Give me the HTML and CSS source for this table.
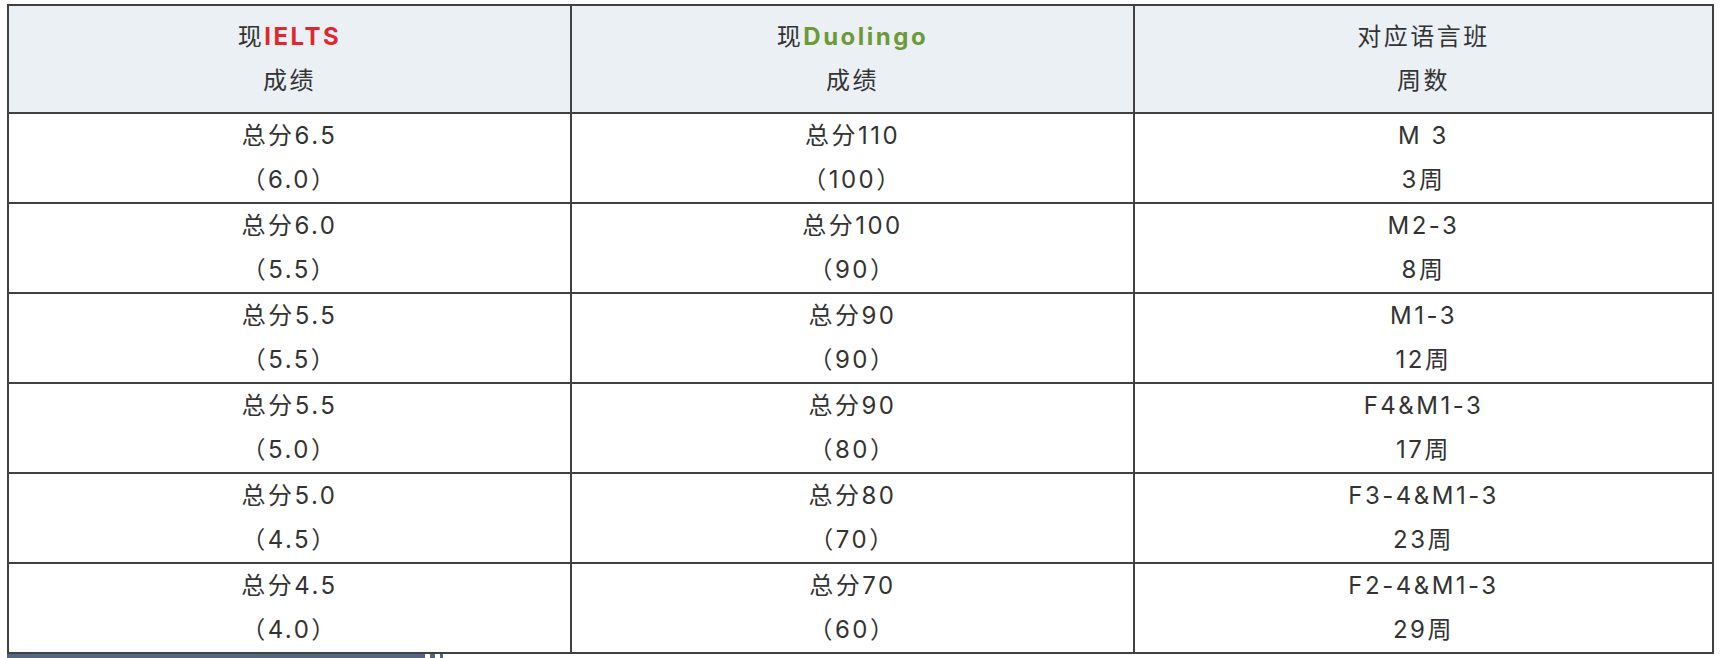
FILE: index.html
```html
<!DOCTYPE html>
<html lang="zh-CN">
<head>
<meta charset="utf-8">
<title>成绩对照表</title>
<link rel="stylesheet" href="styles.css">
</head>
<body>
<div class="wrap">
  <table class="grid">
    <colgroup>
      <col class="c1"><col class="c2"><col class="c3">
    </colgroup>
    <thead>
      <tr>
        <th>现<span class="ielts">IELTS</span><br>成绩</th>
        <th>现<span class="duo">Duolingo</span><br>成绩</th>
        <th>对应语言班<br>周数</th>
      </tr>
    </thead>
    <tbody>
      <tr><td>总分6.5<br>（6.0）</td><td>总分110<br>（100）</td><td>M 3<br>3周</td></tr>
      <tr><td>总分6.0<br>（5.5）</td><td>总分100<br>（90）</td><td>M2-3<br>8周</td></tr>
      <tr><td>总分5.5<br>（5.5）</td><td>总分90<br>（90）</td><td>M1-3<br>12周</td></tr>
      <tr><td>总分5.5<br>（5.0）</td><td>总分90<br>（80）</td><td>F4&amp;M1-3<br>17周</td></tr>
      <tr><td>总分5.0<br>（4.5）</td><td>总分80<br>（70）</td><td>F3-4&amp;M1-3<br>23周</td></tr>
      <tr><td>总分4.5<br>（4.0）</td><td>总分70<br>（60）</td><td>F2-4&amp;M1-3<br>29周</td></tr>
    </tbody>
  </table>
  <div class="scroll">
    <span class="thumb"></span><span class="tick t1"></span><span class="tick t2"></span>
  </div>
</div>
</body>
</html>
```
FILE: styles.css
```css
html, body {
  margin: 0;
  padding: 0;
  background: #ffffff;
}
.wrap {
  padding: 4px 0 0 7px;
}
.grid {
  width: 1707px;
  table-layout: fixed;
  border-collapse: separate;
  border-spacing: 0;
  border-top: 2px solid #414141;
  border-left: 2px solid #414141;
  font-family: "Inter", "Noto Sans CJK SC", sans-serif;
  font-size: 24px;
  letter-spacing: 2.5px;
  color: #333333;
}
.c1 { width: 563px; }
.c2 { width: 563px; }
.c3 { width: 579px; }
.grid th,
.grid td {
  border-right: 2px solid #414141;
  border-bottom: 2px solid #414141;
  text-align: center;
  vertical-align: middle;
  line-height: 44px;
  padding: 0;
  font-weight: normal;
}
.grid th {
  background: #ebf0f5;
  padding: 9px 0;
}
.ielts {
  color: #e2262c;
  font-weight: bold;
}
.duo {
  color: #6b9a37;
  font-weight: bold;
}
.scroll {
  display: flex;
  align-items: stretch;
  height: 4px;
}
.thumb {
  width: 418px;
  background: #56657e;
}
.tick {
  background: #56657e;
}
.t1 { width: 5px; margin-left: 5px; }
.t2 { width: 3px; margin-left: 5px; }
```
